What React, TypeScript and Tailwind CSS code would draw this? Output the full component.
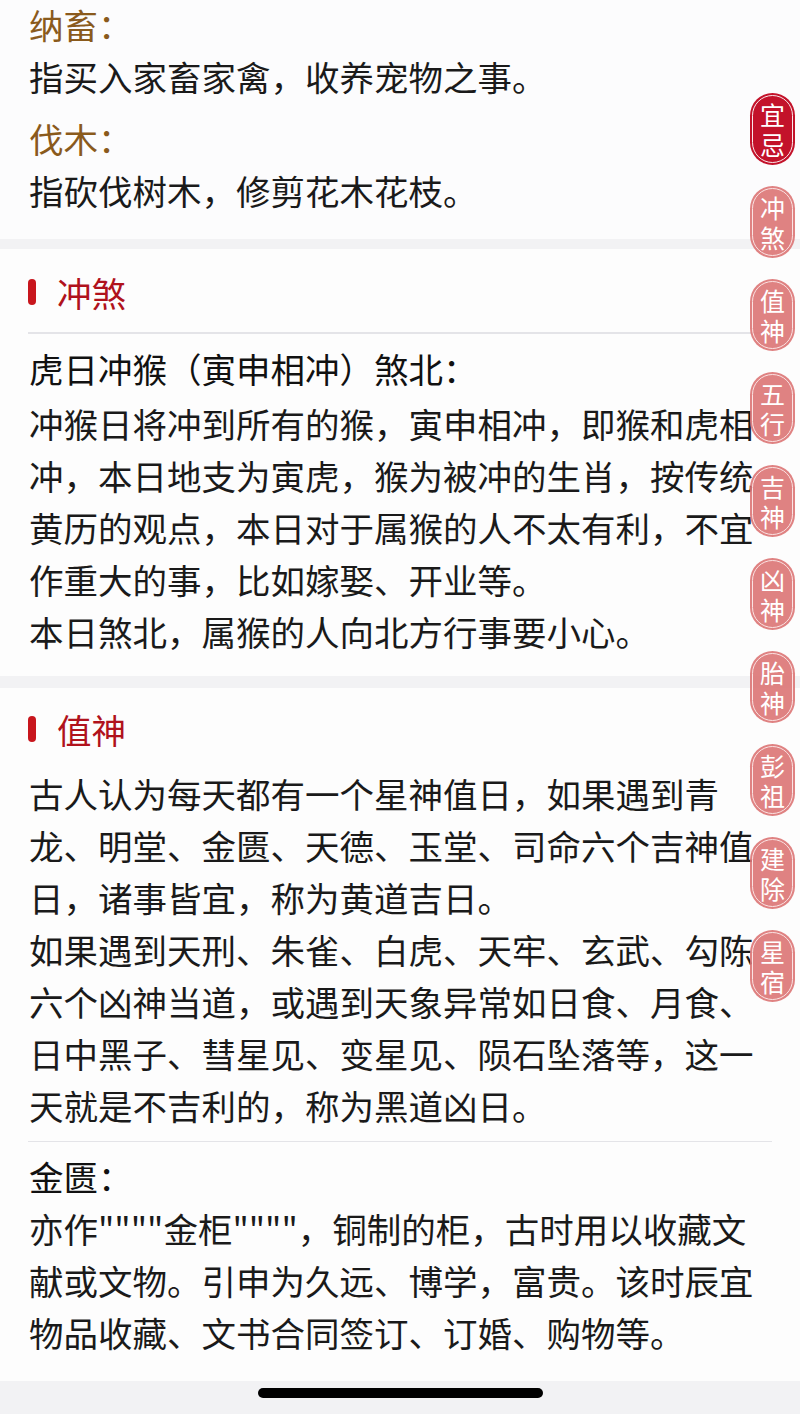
const navItems = ['宜忌', '冲煞', '值神', '五行', '吉神', '凶神', '胎神', '彭祖', '建除', '星宿'];

const chongLines = [
  '冲猴日将冲到所有的猴，寅申相冲，即猴和虎相',
  '冲，本日地支为寅虎，猴为被冲的生肖，按传统',
  '黄历的观点，本日对于属猴的人不太有利，不宜',
  '作重大的事，比如嫁娶、开业等。',
  '本日煞北，属猴的人向北方行事要小心。',
];

const zhiLines = [
  '古人认为每天都有一个星神值日，如果遇到青',
  '龙、明堂、金匮、天德、玉堂、司命六个吉神值',
  '日，诸事皆宜，称为黄道吉日。',
  '如果遇到天刑、朱雀、白虎、天牢、玄武、勾陈',
  '六个凶神当道，或遇到天象异常如日食、月食、',
  '日中黑子、彗星见、变星见、陨石坠落等，这一',
  '天就是不吉利的，称为黑道凶日。',
];

const jinLines = [
  '亦作""""金柜""""，铜制的柜，古时用以收藏文',
  '献或文物。引申为久远、博学，富贵。该时辰宜',
  '物品收藏、文书合同签订、订婚、购物等。',
];

function Lines({ lines }: { lines: string[] }) {
  return (
    <div className="text-[#1a1a1a]">
      {lines.map((l) => (
        <p key={l} className="h-[52px] whitespace-nowrap">
          {l}
        </p>
      ))}
    </div>
  );
}

function SectionTitle({ title }: { title: string }) {
  return (
    <div className="flex h-[52px] items-center gap-[21px] px-[28px]">
      <span className="h-[26px] w-[8px] rounded-full bg-[#c8161d]" />
      <h2 className="text-[#b0121c]">{title}</h2>
    </div>
  );
}

export default function App() {
  return (
    <div
      className="relative h-[1414px] w-[800px] overflow-hidden bg-[#f2f2f4] text-[34.5px] leading-[52px]"
      style={{ fontFamily: '"Noto Sans CJK SC", "Noto Sans", sans-serif' }}
    >
      {/* top card, partially scrolled */}
      <section className="bg-[#fcfcfd] pb-[23px] pl-[29px]">
        <p className="-mt-[2px] h-[52px] text-[#8a5a1c]">纳畜：</p>
        <Lines lines={['指买入家畜家禽，收养宠物之事。']} />
        <p className="mt-[10px] h-[52px] text-[#8a5a1c]">伐木：</p>
        <Lines lines={['指砍伐树木，修剪花木花枝。']} />
      </section>

      <section className="mt-[10px] bg-[#fdfdfd] pb-[19px] pt-[17px]">
        <SectionTitle title="冲煞" />
        <div className="mx-[28px] mt-[14px] h-[1.5px] bg-[#e4e4e8]" />
        <div className="mt-[8px] pl-[29px]">
          <p className="h-[52px] text-[#111]">虎日冲猴（寅申相冲）煞北：</p>
          <div className="mt-[3px]">
            <Lines lines={chongLines} />
          </div>
        </div>
      </section>

      <section className="mt-[12px] bg-[#fdfdfd] pb-[23px] pt-[15px]">
        <SectionTitle title="值神" />
        <div className="mt-[12px] pl-[29px]">
          <Lines lines={zhiLines} />
        </div>
        <div className="mx-[28px] mt-[10px] h-[1.5px] bg-[#e4e4e8]" />
        <div className="mt-[8px] pl-[29px]">
          <p className="h-[52px] text-[#111]">金匮：</p>
          <Lines lines={jinLines} />
        </div>
      </section>

      {/* side navigation */}
      <nav className="absolute left-[750px] top-[93px] flex flex-col gap-[21px]">
        {navItems.map((item, i) => (
          <div
            key={item}
            className={`flex h-[72px] w-[45px] items-center justify-center rounded-full p-[2px] ${
              i === 0 ? 'bg-[#c3122a]' : 'bg-[#dc7474]/90'
            }`}
          >
            <div
              className={`flex h-full w-full flex-col items-center justify-center rounded-full border-[1.5px] text-[25px] leading-[30px] text-white ${
                i === 0 ? 'border-white/90' : 'border-[#fbe3e3]'
              }`}
            >
              <span>{item[0]}</span>
              <span>{item[1]}</span>
            </div>
          </div>
        ))}
      </nav>

      {/* home indicator */}
      <div className="absolute left-[258px] top-[1388px] h-[10px] w-[285px] rounded-full bg-black" />
    </div>
  );
}
